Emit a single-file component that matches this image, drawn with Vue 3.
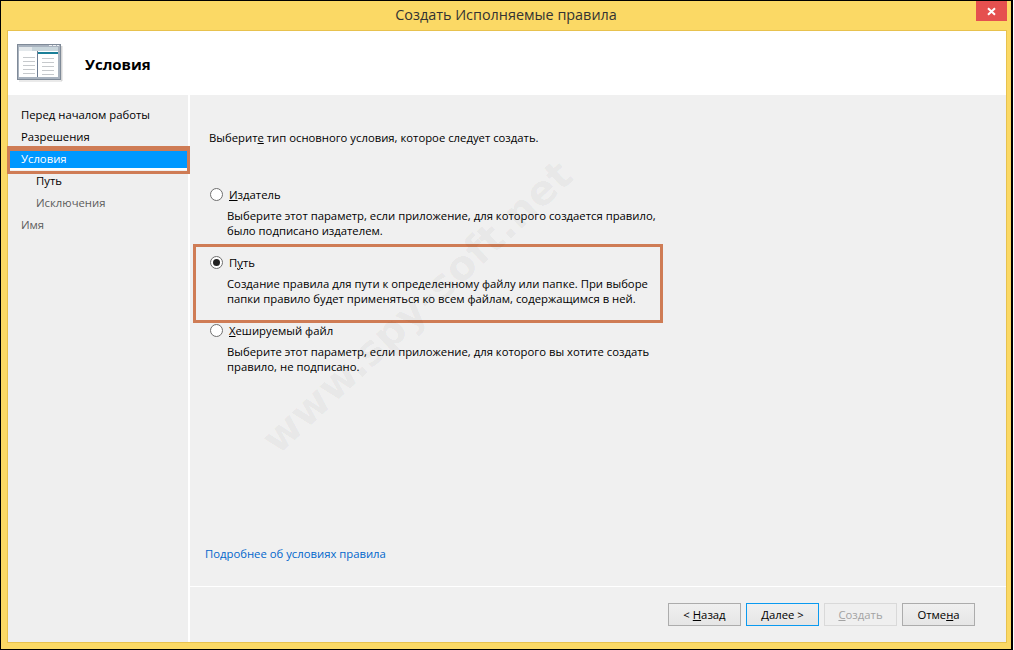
<script setup>
const steps = [
  { label: 'Перед началом работы' },
  { label: 'Разрешения' },
  { label: 'Условия', active: true },
  { label: 'Путь', sub: true },
  { label: 'Исключения', sub: true, muted: true },
  { label: 'Имя', muted: true }
]
const options = [
  { pre: '', key: 'И', post: 'здатель', lines: ['Выберите этот параметр, если приложение, для которого создается правило,', 'было подписано издателем.'] },
  { pre: 'П', key: 'у', post: 'ть', checked: true, lines: ['Создание правила для пути к определенному файлу или папке. При выборе', 'папки правило будет применяться ко всем файлам, содержащимся в ней.'] },
  { pre: '', key: 'Х', post: 'ешируемый файл', lines: ['Выберите этот параметр, если приложение, для которого вы хотите создать', 'правило, не подписано.'] }
]
</script>

<template>
  <div class="screen">
    <div class="window">
      <div class="titlebar">
        <span class="title">Создать Исполняемые правила</span>
        <button class="close" aria-label="Закрыть">
          <svg width="9" height="9" viewBox="0 0 9 9"><path d="M1 1.2 8 7.8M8 1.2 1 7.8" stroke="#fff" stroke-width="2" fill="none"/></svg>
        </button>
      </div>
      <div class="dialog">
        <header class="header">
          <svg class="logo" width="46" height="38" viewBox="0 0 46 38">
            <rect x="0.5" y="0.5" width="43" height="35" fill="#a9b3bf" stroke="#7f8a98"/>
            <rect x="44" y="2" width="1.5" height="35" fill="#d5d5d5"/>
            <rect x="2" y="36.5" width="43" height="1" fill="#d5d5d5"/>
            <rect x="32" y="1" width="3" height="1" fill="#eef1f4"/><rect x="36" y="1" width="3" height="1" fill="#eef1f4"/><rect x="40" y="1" width="2" height="1" fill="#eef1f4"/>
            <rect x="2" y="3" width="39" height="30" fill="#fff"/>
            <rect x="2" y="3" width="39" height="4" fill="#c9d6dc"/>
            <rect x="2" y="3" width="13" height="4" fill="#e4e9ec"/>
            <rect x="21" y="8" width="20" height="2" fill="#1b7f98"/>
            <rect x="20" y="7" width="1" height="26" fill="#6d7c92"/>
            <path d="M6 13.5h12M6 17.5h12M6 21.5h12M6 25.5h12M6 29.5h12M25 14.5h12M25 18.5h12M25 22.5h12M25 26.5h12M25 30.5h12" stroke="#c6c9cc" stroke-width="1"/>
          </svg>
          <h1>Условия</h1>
        </header>
        <div class="body">
          <nav class="sidebar">
            <div v-for="s in steps" :key="s.label" class="step" :class="{ active: s.active, sub: s.sub, muted: s.muted }">{{ s.label }}</div>
            <div class="mark-nav"></div>
          </nav>
          <main class="main">
            <div class="content">
              <p class="intro">Выберит<u>е</u> тип основного условия, которое следует создать.</p>
              <div v-for="o in options" :key="o.key" class="option">
                <div class="opt-head">
                  <span class="radio" :class="{ on: o.checked }"></span>
                  <span>{{ o.pre }}<u>{{ o.key }}</u>{{ o.post }}</span>
                </div>
                <p v-for="l in o.lines" :key="l" class="desc">{{ l }}</p>
              </div>
              <a class="link">Подробнее об условиях правила</a>
              <div class="mark-opt"></div>
              <div class="watermark">www.spy-soft.net</div>
            </div>
            <footer class="footer">
              <button class="btn">&lt; <u>Н</u>азад</button>
              <button class="btn primary"><u>Д</u>алее &gt;</button>
              <button class="btn disabled"><u>С</u>оздать</button>
              <button class="btn">Отме<u>н</u>а</button>
            </footer>
          </main>
        </div>
      </div>
    </div>
  </div>
</template>

<style>
html, body { margin: 0; background: #fff; }
</style>

<style scoped>
.screen { width: 1014px; height: 650px; overflow: hidden; font-family: "Open Sans", "Noto Sans", sans-serif; font-size: 11.3px; color: #000; }
.window { box-sizing: border-box; width: 1013px; height: 650px; border: 1px solid #000; border-right-width: 2px; background: #fbd965; display: flex; flex-direction: column; }
.titlebar { height: 29px; flex: none; position: relative; display: flex; justify-content: center; padding-top: 4px; box-sizing: border-box; }
.title { font-size: 14.4px; color: #333; line-height: 20px; }
.close { position: absolute; top: 0; right: 4px; width: 31px; height: 20px; border: 0; padding: 0; background: #e5504f; display: flex; align-items: center; justify-content: center; }
.dialog { flex: none; box-sizing: border-box; width: 1000px; height: 613px; margin-left: 6px; border: 1px solid #e8c24e; background: #fff; display: flex; flex-direction: column; }
.header { height: 64px; flex: none; display: flex; align-items: center; padding-left: 9px; }
h1 { margin: 2px 0 0 22px; font-size: 15px; font-weight: 700; line-height: 20px; }
.body { flex: 1; display: flex; min-height: 0; background: #fff; }
.sidebar { width: 180px; flex: none; box-sizing: border-box; padding-top: 9px; background: #efefef; position: relative; margin-right: 2px; }
.step { height: 22px; line-height: 22px; padding-left: 13px; }
.step.sub { padding-left: 28px; }
.step.muted { color: #5c5c5c; }
.step.active { color: #fff; position: relative; isolation: isolate; }
.step.active::before { content: ""; position: absolute; left: 2px; right: 1px; top: 2px; height: 18px; background: #0098ff; box-shadow: 0 2px 0 #fff; z-index: -1; }
.mark-nav { position: absolute; left: -1px; top: 51px; width: 183px; height: 28px; box-sizing: border-box; border: 3px solid #cf7c55; border-top-width: 5px; }
.main { flex: 1; display: flex; flex-direction: column; background: #f0f0f0; min-width: 0; }
.content { flex: 1; position: relative; overflow: hidden; padding: 34px 0 0 19px; }
.intro { margin: 0 0 38px; line-height: 18px; }
.option { margin-bottom: 18px; padding-left: 1px; height: 50px; }
.option p { margin: 0; }
.opt-head { display: flex; align-items: center; height: 18px; margin-bottom: 5px; }
.opt-head span:last-child { margin-left: 6px; }
.radio { box-sizing: border-box; width: 13px; height: 13px; border: 1px solid #6f6f6f; border-radius: 50%; background: #fff; flex: none; position: relative; }
.radio.on::after { content: ""; position: absolute; left: 2px; top: 2px; width: 7px; height: 7px; border-radius: 50%; background: #222; }
.desc { line-height: 15px; padding-left: 17px; }
.link { position: absolute; left: 15px; top: 450px; color: #0066cc; line-height: 18px; }
.mark-opt { position: absolute; left: 3px; top: 149px; width: 470px; height: 79px; box-sizing: border-box; border: 3px solid #cf7c55; }
.watermark { position: absolute; left: 7px; top: 187px; width: 440px; text-align: center; font-family: "DejaVu Sans", sans-serif; font-weight: 700; font-size: 41px; line-height: 50px; color: rgba(0, 0, 0, 0.045); transform: rotate(-43deg); pointer-events: none; white-space: nowrap; }
.footer { height: 56px; flex: none; box-sizing: border-box; border-top: 1px solid #fff; padding: 16px 31px 0 0; display: flex; justify-content: flex-end; gap: 5px; }
.btn { box-sizing: border-box; width: 73px; height: 23px; border: 1px solid #acacac; background: linear-gradient(#f0f0f0, #e5e5e5); font: inherit; color: #000; padding: 0; line-height: 20px; }
.btn.primary { border-color: #0a9af0; }
.btn.disabled { border-color: #d9d9d9; color: #a3a3a3; background: #efefef; }
</style>
